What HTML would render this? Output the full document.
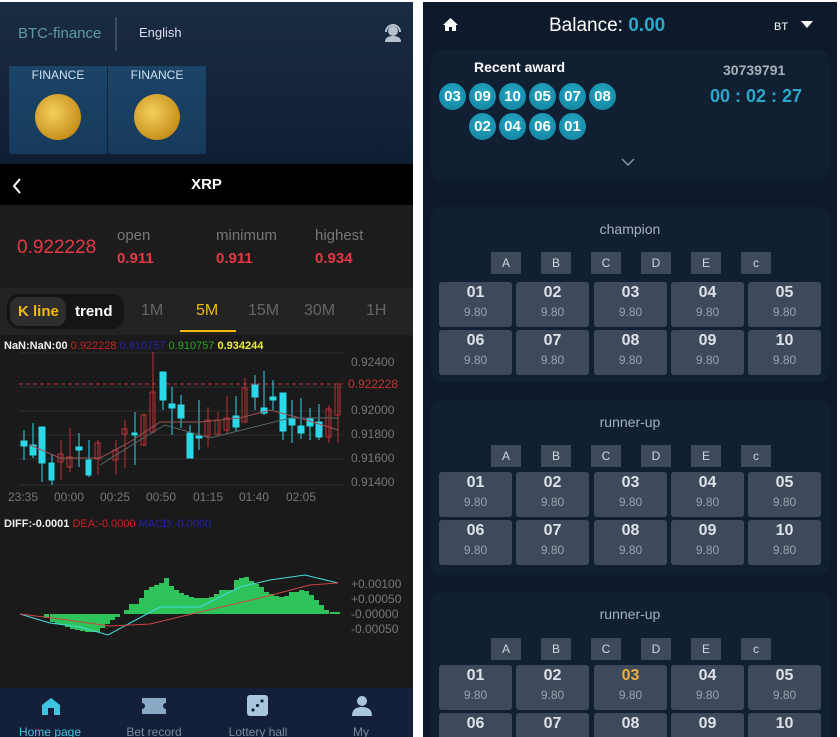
<!DOCTYPE html>
<html><head><meta charset="utf-8"><style>
*{margin:0;padding:0;box-sizing:border-box}
html,body{width:840px;height:737px;overflow:hidden}
body{background:#fff;font-family:"Liberation Sans",sans-serif;position:relative}
.L{position:absolute;left:0;top:2px;width:413px;height:735px;background:#1a1a1a;overflow:hidden}
.R{position:absolute;left:423px;top:2px;width:414px;height:735px;background:#0e1a2c;overflow:hidden}
.abs{position:absolute}
.hd{left:0;top:0;width:413px;height:162px;background:linear-gradient(180deg,#1a2c42,#0f1e33)}
.fin{top:64px;width:98px;height:88px;background:linear-gradient(180deg,#1b4466,#163a5c);color:#cfe0ee;font-size:12px;text-align:center;padding-top:2px}
.coin{width:46px;height:46px;border-radius:50%;margin:12px auto 0;background:radial-gradient(circle at 40% 40%,#f3cf5a,#c8921e 70%,#8a5f10);}
.tb{top:162px;left:0;width:413px;height:41px;background:#000;color:#fff;font-weight:bold;font-size:15px;text-align:center;line-height:41px}
.pr{top:203px;left:0;width:413px;height:83px;background:#1c1c1c}
.red{color:#e33a45}
.gry{color:#777}
.tabs{top:286px;left:0;width:413px;height:47px;background:#232323}
.tabs span{position:absolute;top:14px;font-size:16px;color:#666}
.nav{top:686px;left:0;width:413px;height:49px;background:#14203a}
.nav div{position:absolute;top:37px;font-size:12px;color:#7a8a9c;width:100px;text-align:center}
.card{left:8px;width:398px;background:#111f33;border-radius:10px}
.ball{position:absolute;width:27px;height:27px;border-radius:50%;background:radial-gradient(circle at 50% 35%,#23a7c4,#127f9c);color:#fff;font-weight:bold;font-size:15px;text-align:center;line-height:27px}
.lt{position:absolute;width:30px;height:22px;background:#3e4a5c;color:#cfd6de;font-size:12px;text-align:center;line-height:22px}
.bt{position:absolute;width:73px;height:45px;background:#3e4a5c;border-radius:3px;text-align:center;color:#dde2e8}
.bt b{display:block;font-size:16px;margin-top:2px}
.bt i{display:block;font-style:normal;font-size:12px;color:#98a2ae;margin-top:3px}
.st{position:absolute;left:0;width:414px;text-align:center;color:#a8b0ba;font-size:14px}
</style></head><body>
<div class="L">
 <div class="abs hd">
  <div class="abs" style="left:18px;top:23px;color:#5f9aa6;font-size:15px">BTC-finance</div>
  <div class="abs" style="left:115px;top:15px;width:2px;height:34px;background:#3a4b5e"></div>
  <div class="abs" style="left:139px;top:23px;color:#dde;font-size:13px">English</div>
  <svg class="abs" style="left:383px;top:21px" width="20" height="20" viewBox="0 0 20 20"><circle cx="10" cy="8" r="5" fill="#b5c0cc"/><path d="M3 9a7 7 0 0 1 14 0" stroke="#b5c0cc" stroke-width="2" fill="none"/><path d="M2 19q0-6 8-6q8 0 8 6z" fill="#b5c0cc"/></svg>
  <div class="abs fin" style="left:9px">FINANCE<div class="coin"></div></div>
  <div class="abs fin" style="left:108px">FINANCE<div class="coin"></div></div>
 </div>
 <div class="abs tb"><svg class="abs" style="left:12px;top:14px" width="10" height="16"><path d="M8 1 2 8 8 15" stroke="#fff" stroke-width="2" fill="none"/></svg>XRP</div>
 <div class="abs pr">
  <div class="abs red" style="left:17px;top:32px;font-size:19px">0.922228</div>
  <div class="abs gry" style="left:117px;top:22px;font-size:15px">open</div>
  <div class="abs red" style="left:117px;top:45px;font-size:15px;font-weight:bold">0.911</div>
  <div class="abs gry" style="left:216px;top:22px;font-size:15px">minimum</div>
  <div class="abs red" style="left:216px;top:45px;font-size:15px;font-weight:bold">0.911</div>
  <div class="abs gry" style="left:315px;top:22px;font-size:15px">highest</div>
  <div class="abs red" style="left:315px;top:45px;font-size:15px;font-weight:bold">0.934</div>
 </div>
 <div class="abs tabs">
  <div class="abs" style="left:7px;top:6px;width:117px;height:35px;background:#151515;border-radius:12px"></div>
  <div class="abs" style="left:10px;top:9px;width:56px;height:29px;background:#2e2e2e;border-radius:10px"></div>
  <span style="left:18px;color:#f0b90b;font-weight:bold;font-size:15px;top:15px">K line</span>
  <span style="left:75px;color:#fff;font-weight:bold;font-size:15px;top:15px">trend</span>
  <span style="left:141px">1M</span><span style="left:196px;color:#f0b90b">5M</span>
  <span style="left:248px">15M</span><span style="left:304px">30M</span><span style="left:366px">1H</span>
  <div class="abs" style="left:180px;top:42px;width:56px;height:2px;background:#f0b90b"></div>
 </div>
 <div class="abs" style="left:4px;top:338px;font-size:11px;white-space:nowrap"><span style="color:#eee;font-weight:bold">NaN:NaN:00</span> <span style="color:#c22">0.922228</span> <span style="color:#22a">0.910757</span> <span style="color:#2a2">0.910757</span> <span style="color:#ee3;font-weight:bold">0.934244</span></div>
 <svg class="abs" style="left:0;top:338px" width="413" height="300" viewBox="0 0 413 300">
  <g stroke="#2e2e2e"><line x1="19" y1="13" x2="343" y2="13"/><line x1="19" y1="47" x2="343" y2="47"/><line x1="19" y1="71" x2="343" y2="71"/><line x1="19" y1="95" x2="343" y2="95"/><line x1="19" y1="119" x2="343" y2="119"/><line x1="19" y1="145" x2="343" y2="145"/></g>
  <line x1="19" y1="44" x2="343" y2="44" stroke="#c33" stroke-dasharray="4,3"/>
  <g font-size="12" fill="#777"><text x="351" y="26">0.92400</text><text x="351" y="74">0.92000</text><text x="351" y="98">0.91800</text><text x="351" y="122">0.91600</text><text x="351" y="146">0.91400</text><text x="348" y="48" fill="#b33">0.922228</text>
  <text x="8" y="161">23:35</text><text x="54" y="161">00:00</text><text x="100" y="161">00:25</text><text x="146" y="161">00:50</text><text x="193" y="161">01:15</text><text x="239" y="161">01:40</text><text x="286" y="161">02:05</text></g>
  <g stroke="#2ad8e8" fill="#2ad8e8">
   <line x1="24" y1="90" x2="24" y2="120"/><rect x="21" y="101" width="6" height="5"/>
   <line x1="33" y1="83" x2="33" y2="118"/><rect x="30" y="105" width="6" height="10"/>
   <line x1="42" y1="87" x2="42" y2="142"/><rect x="39" y="87" width="6" height="36"/>
   <line x1="52" y1="115" x2="52" y2="145"/><rect x="49" y="123" width="5" height="17"/>
   <line x1="79" y1="93" x2="79" y2="127"/><rect x="76" y="107" width="6" height="3"/>
   <line x1="89" y1="100" x2="89" y2="137"/><rect x="86" y="120" width="5" height="15"/>
   <line x1="135" y1="72" x2="135" y2="125"/><rect x="132" y="93" width="5" height="2"/>
   <line x1="163" y1="45" x2="163" y2="70"/><rect x="160" y="32" width="6" height="28"/>
   <line x1="172" y1="47" x2="172" y2="95"/><rect x="169" y="64" width="6" height="4"/>
   <line x1="181" y1="55" x2="181" y2="88"/><rect x="178" y="65" width="6" height="13"/>
   <line x1="190" y1="85" x2="190" y2="118"/><rect x="187" y="93" width="6" height="25"/>
   <line x1="199" y1="60" x2="199" y2="110"/><rect x="196" y="96" width="6" height="2"/>
   <line x1="236" y1="56" x2="236" y2="91"/><rect x="233" y="76" width="6" height="11"/>
   <line x1="255" y1="35" x2="255" y2="70"/><rect x="252" y="45" width="6" height="12"/>
   <line x1="264" y1="31" x2="264" y2="75"/><rect x="261" y="68" width="6" height="5"/>
   <line x1="273" y1="40" x2="273" y2="70"/><rect x="270" y="57" width="6" height="3"/>
   <line x1="283" y1="53" x2="283" y2="100"/><rect x="280" y="53" width="6" height="38"/>
   <line x1="292" y1="60" x2="292" y2="103"/><rect x="289" y="78" width="6" height="7"/>
   <line x1="301" y1="58" x2="301" y2="99"/><rect x="298" y="86" width="6" height="7"/>
   <line x1="310" y1="68" x2="310" y2="100"/><rect x="307" y="78" width="6" height="8"/>
   <line x1="319" y1="64" x2="319" y2="100"/><rect x="316" y="82" width="6" height="15"/>
  </g>
  <g stroke="#b33" fill="none">
   <line x1="61" y1="100" x2="61" y2="140"/><rect x="58" y="114" width="5" height="8"/>
   <line x1="70" y1="88" x2="70" y2="132"/><rect x="67" y="117" width="5" height="10"/>
   <line x1="98" y1="100" x2="98" y2="135"/><rect x="95" y="103" width="5" height="16"/>
   <line x1="116" y1="100" x2="116" y2="135"/><rect x="113" y="110" width="5" height="10"/>
   <line x1="125" y1="80" x2="125" y2="128"/><rect x="122" y="89" width="5" height="5"/>
   <line x1="144" y1="73" x2="144" y2="106"/><rect x="141" y="75" width="5" height="30"/>
   <line x1="153" y1="12" x2="153" y2="93"/><rect x="150" y="52" width="5" height="40"/>
   <line x1="208" y1="67" x2="208" y2="107"/><rect x="205" y="80" width="5" height="16"/>
   <line x1="218" y1="72" x2="218" y2="96"/><rect x="215" y="80" width="5" height="14"/>
   <line x1="227" y1="56" x2="227" y2="94"/><rect x="224" y="78" width="5" height="12"/>
   <line x1="245" y1="38" x2="245" y2="83"/><rect x="242" y="48" width="5" height="34"/>
   <line x1="329" y1="65" x2="329" y2="103"/><rect x="326" y="69" width="5" height="28"/>
   <line x1="338" y1="45" x2="338" y2="103"/><rect x="335" y="44" width="5" height="31"/>
  </g>
  <path d="M30 105 60 118 100 118 130 102 160 82 200 82 240 78 270 70 300 78 338 90" stroke="#955" fill="none"/>
  <path d="M100 125 140 100 165 85 210 98 250 88 290 78 338 78" stroke="#566" fill="none"/>
  <text x="4" y="187" font-size="11"><tspan fill="#eee" font-weight="bold">DIFF:-0.0001</tspan> <tspan fill="#c22">DEA:-0.0000</tspan> <tspan fill="#22a">MACD:-0.0000</tspan></text>
  <g fill="#2ec25a">
   <rect x="44" y="274" width="5" height="4"/><rect x="50" y="274" width="5" height="8"/><rect x="55" y="274" width="5" height="10"/><rect x="60" y="274" width="5" height="11"/><rect x="65" y="274" width="5" height="13"/><rect x="70" y="274" width="5" height="15"/><rect x="75" y="274" width="5" height="16"/><rect x="80" y="274" width="5" height="17"/><rect x="85" y="274" width="5" height="18"/><rect x="90" y="274" width="5" height="18"/><rect x="95" y="274" width="5" height="18"/><rect x="100" y="274" width="5" height="14"/><rect x="105" y="274" width="5" height="10"/><rect x="110" y="274" width="5" height="6"/><rect x="115" y="274" width="5" height="3"/>
   <rect x="124" y="270" width="5" height="4"/><rect x="129" y="264" width="5" height="10"/><rect x="134" y="264" width="5" height="10"/><rect x="139" y="258" width="5" height="16"/><rect x="144" y="250" width="5" height="24"/><rect x="149" y="247" width="5" height="27"/><rect x="154" y="245" width="5" height="29"/><rect x="159" y="243" width="5" height="31"/><rect x="164" y="238" width="5" height="36"/><rect x="169" y="246" width="5" height="28"/><rect x="174" y="250" width="5" height="24"/><rect x="179" y="253" width="5" height="21"/><rect x="184" y="255" width="5" height="19"/><rect x="189" y="257" width="5" height="17"/><rect x="194" y="258" width="5" height="16"/><rect x="199" y="258" width="5" height="16"/><rect x="204" y="258" width="5" height="16"/><rect x="209" y="257" width="5" height="17"/><rect x="214" y="254" width="5" height="20"/><rect x="219" y="250" width="5" height="24"/><rect x="224" y="250" width="5" height="24"/><rect x="229" y="250" width="5" height="24"/><rect x="234" y="240" width="5" height="34"/><rect x="239" y="238" width="5" height="36"/><rect x="244" y="237" width="5" height="37"/><rect x="249" y="241" width="5" height="33"/><rect x="254" y="244" width="5" height="30"/><rect x="259" y="247" width="5" height="27"/><rect x="264" y="252" width="5" height="22"/><rect x="269" y="254" width="5" height="20"/><rect x="274" y="256" width="5" height="18"/><rect x="279" y="257" width="5" height="17"/><rect x="284" y="256" width="5" height="18"/><rect x="289" y="252" width="5" height="22"/><rect x="294" y="252" width="5" height="22"/><rect x="299" y="250" width="5" height="24"/><rect x="304" y="251" width="5" height="23"/><rect x="309" y="255" width="5" height="19"/><rect x="314" y="260" width="5" height="14"/><rect x="319" y="265" width="5" height="9"/><rect x="324" y="270" width="5" height="4"/><rect x="330" y="272" width="10" height="2"/>
  </g>
  <path d="M20 274 50 283 80 287 108 295 130 283 160 267 200 267 240 247 270 240 305 235 338 243" stroke="#4dd" fill="none"/>
  <path d="M20 274 60 279 110 286 150 284 200 272 260 258 310 245 338 243" stroke="#c44" fill="none"/>
  <g font-size="12" fill="#777"><text x="351" y="248">+0.00100</text><text x="351" y="263">+0.00050</text><text x="351" y="278">-0.00000</text><text x="351" y="293">-0.00050</text></g>
 </svg>
 <div class="abs nav">
  <svg class="abs" style="left:41px;top:8px" width="20" height="20"><path d="M1 9 10 2 19 9V19H1z" fill="#3ec6e0"/><rect x="7" y="12" width="6" height="7" fill="#14203a"/></svg>
  <svg class="abs" style="left:142px;top:10px" width="24" height="16"><path d="M0 0h24v5a3 3 0 0 0 0 6v5H0v-5a3 3 0 0 0 0-6z" fill="#8aa9c4"/></svg>
  <svg class="abs" style="left:247px;top:7px" width="21" height="21"><rect width="21" height="21" rx="3" fill="#a9c6de"/><circle cx="6" cy="15" r="1.6" fill="#14203a"/><circle cx="10.5" cy="10.5" r="1.6" fill="#14203a"/><circle cx="15" cy="6" r="1.6" fill="#14203a"/></svg>
  <svg class="abs" style="left:352px;top:7px" width="20" height="21"><circle cx="10" cy="6" r="5" fill="#a9c6de"/><path d="M0 21q0-9 10-9q10 0 10 9z" fill="#a9c6de"/></svg>
  <div style="left:0;color:#3ec6e0">Home page</div><div style="left:104px">Bet record</div><div style="left:208px">Lottery hall</div><div style="left:311px">My</div>
 </div>
</div>
<div class="R">
 <svg class="abs" style="left:20px;top:15px" width="15" height="15"><path d="M7.5 1 15 8h-2v6H9V10H6v4H2V8H0z" fill="#fff"/></svg>
 <div class="abs" style="left:126px;top:13px;color:#fff;font-size:19px">Balance: <span style="color:#2aa8c8;font-weight:bold">0.00</span></div>
 <div class="abs" style="left:351px;top:19px;color:#fff;font-size:11px">BT</div>
 <svg class="abs" style="left:378px;top:19px" width="12" height="8"><path d="M0 0h12L6 7z" fill="#fff"/></svg>
 <div class="abs card" style="top:48px;height:130px"></div>
 <div class="abs" style="left:51px;top:57px;color:#fff;font-weight:bold;font-size:14px">Recent award</div>
 <div class="ball" style="left:16px;top:81px">03</div><div class="ball" style="left:46px;top:81px">09</div><div class="ball" style="left:76px;top:81px">10</div><div class="ball" style="left:106px;top:81px">05</div><div class="ball" style="left:136px;top:81px">07</div><div class="ball" style="left:166px;top:81px">08</div>
 <div class="ball" style="left:46px;top:111px">02</div><div class="ball" style="left:76px;top:111px">04</div><div class="ball" style="left:106px;top:111px">06</div><div class="ball" style="left:136px;top:111px">01</div>
 <div class="abs" style="left:300px;top:60px;color:#a8b0ba;font-weight:bold;font-size:14px">30739791</div>
 <div class="abs" style="left:287px;top:84px;color:#2aa8c8;font-weight:bold;font-size:18px">00 : 02 : 27</div>
 <svg class="abs" style="left:198px;top:156px" width="14" height="9"><path d="M1 1 7 7 13 1" stroke="#8894a2" stroke-width="1.5" fill="none"/></svg>

 <div class="abs card" style="top:205px;height:175px"></div>
 <div class="st" style="top:219px">champion</div>
 <div class="abs card" style="top:398px;height:175px"></div>
 <div class="st" style="top:412px">runner-up</div>
 <div class="abs card" style="top:590px;height:160px"></div>
 <div class="st" style="top:604px">runner-up</div>
 <div class="lt" style="left:68px;top:250px">A</div><div class="lt" style="left:118px;top:250px">B</div><div class="lt" style="left:168px;top:250px">C</div><div class="lt" style="left:218px;top:250px">D</div><div class="lt" style="left:268px;top:250px">E</div><div class="lt" style="left:318px;top:250px">c</div>
 <div class="bt" style="left:16px;top:280px"><b>01</b><i>9.80</i></div><div class="bt" style="left:93px;top:280px"><b>02</b><i>9.80</i></div><div class="bt" style="left:171px;top:280px"><b>03</b><i>9.80</i></div><div class="bt" style="left:248px;top:280px"><b>04</b><i>9.80</i></div><div class="bt" style="left:325px;top:280px"><b>05</b><i>9.80</i></div>
 <div class="bt" style="left:16px;top:328px"><b>06</b><i>9.80</i></div><div class="bt" style="left:93px;top:328px"><b>07</b><i>9.80</i></div><div class="bt" style="left:171px;top:328px"><b>08</b><i>9.80</i></div><div class="bt" style="left:248px;top:328px"><b>09</b><i>9.80</i></div><div class="bt" style="left:325px;top:328px"><b>10</b><i>9.80</i></div>
 <div class="lt" style="left:68px;top:443px">A</div><div class="lt" style="left:118px;top:443px">B</div><div class="lt" style="left:168px;top:443px">C</div><div class="lt" style="left:218px;top:443px">D</div><div class="lt" style="left:268px;top:443px">E</div><div class="lt" style="left:318px;top:443px">c</div>
 <div class="bt" style="left:16px;top:470px"><b>01</b><i>9.80</i></div><div class="bt" style="left:93px;top:470px"><b>02</b><i>9.80</i></div><div class="bt" style="left:171px;top:470px"><b>03</b><i>9.80</i></div><div class="bt" style="left:248px;top:470px"><b>04</b><i>9.80</i></div><div class="bt" style="left:325px;top:470px"><b>05</b><i>9.80</i></div>
 <div class="bt" style="left:16px;top:518px"><b>06</b><i>9.80</i></div><div class="bt" style="left:93px;top:518px"><b>07</b><i>9.80</i></div><div class="bt" style="left:171px;top:518px"><b>08</b><i>9.80</i></div><div class="bt" style="left:248px;top:518px"><b>09</b><i>9.80</i></div><div class="bt" style="left:325px;top:518px"><b>10</b><i>9.80</i></div>
 <div class="lt" style="left:68px;top:636px">A</div><div class="lt" style="left:118px;top:636px">B</div><div class="lt" style="left:168px;top:636px">C</div><div class="lt" style="left:218px;top:636px">D</div><div class="lt" style="left:268px;top:636px">E</div><div class="lt" style="left:318px;top:636px">c</div>
 <div class="bt" style="left:16px;top:663px"><b>01</b><i>9.80</i></div><div class="bt" style="left:93px;top:663px"><b>02</b><i>9.80</i></div><div class="bt" style="left:171px;top:663px"><b style="color:#e8b040">03</b><i>9.80</i></div><div class="bt" style="left:248px;top:663px"><b>04</b><i>9.80</i></div><div class="bt" style="left:325px;top:663px"><b>05</b><i>9.80</i></div>
 <div class="bt" style="left:16px;top:711px"><b>06</b><i>9.80</i></div><div class="bt" style="left:93px;top:711px"><b>07</b><i>9.80</i></div><div class="bt" style="left:171px;top:711px"><b>08</b><i>9.80</i></div><div class="bt" style="left:248px;top:711px"><b>09</b><i>9.80</i></div><div class="bt" style="left:325px;top:711px"><b>10</b><i>9.80</i></div>
</div>
</body></html>
